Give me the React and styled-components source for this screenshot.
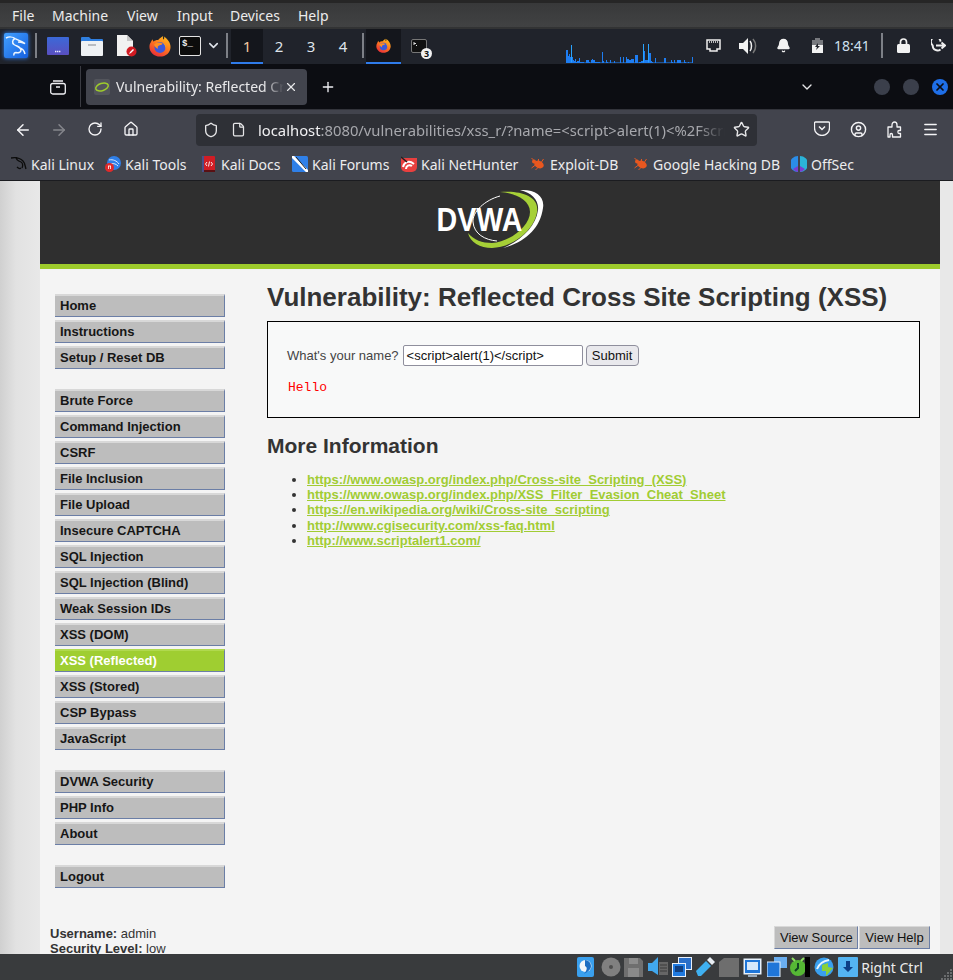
import React from "react";
import styled, { createGlobalStyle } from "styled-components";
import {
  ArrowLeft, ArrowRight, RotateCw, Home, Shield, File, Star, Menu,
  CircleUser, X, Plus, ChevronDown, Bell,
} from "lucide-react";

const Global = createGlobalStyle`
  html, body { margin: 0; padding: 0; background: #393b3d; }
  * { box-sizing: border-box; }
`;

const Shell = styled.div`
  width: 953px; height: 980px; overflow: hidden; display: flex; flex-direction: column;
  font-family: "Noto Sans", sans-serif;
`;

/* VM window menu */
const MenuBar = styled.div`
  height: 29px; border-top: 3px solid #262626; background: linear-gradient(#38393a, #414243);
  border-bottom: 2px solid #323334; display: flex; align-items: center; padding-left: 12px;
  color: #ececec; font-size: 14px;
`;
const MenuItem = styled.span`
  width: ${p => p.$w}px; flex: none;
`;

/* Desktop panel */
const Panel = styled.div`
  height: 35px; background: #20232b; display: flex; align-items: stretch; color: #dfe3ea;
`;
const Slot = styled.div`
  width: ${p => p.$w}px; flex: none; display: flex; align-items: center; justify-content: center;
  position: relative; font-size: ${p => p.$fs || 14}px; color: ${p => p.$c || "inherit"};
  padding-left: ${p => p.$pl || 0}px;
  background: ${p => (p.$active ? "#14161c" : "transparent")};
  border-bottom: 2px solid ${p => (p.$active ? "#2f7bea" : "transparent")};
`;
const KaliGlow = styled.div`
  display: flex; filter: drop-shadow(0 0 2px #2f86ff);
`;
const PanelSep = styled.div`
  width: 2px; height: 25px; background: #7d8087;
`;
const ChartArea = styled.div`
  flex: 1; display: flex; justify-content: flex-end; align-items: flex-end; padding-bottom: 1px;
`;
const TermBadge = styled.span`
  position: absolute; right: 4px; bottom: 3px; width: 11px; height: 11px; border-radius: 50%;
  background: #f2f2f2; color: #111; font-size: 9px; font-weight: 700; line-height: 11px; text-align: center;
`;

/* Firefox tabs */
const TabBar = styled.div`
  height: 45px; background: #0c0d12; display: flex; align-items: center; color: #f0f0f4;
`;
const ViewButton = styled.div`
  width: 81px; height: 41px; border-right: 1px solid #3a3b42; display: flex; align-items: center;
  justify-content: flex-end; padding-right: 14px;
`;
const Tab = styled.div`
  width: 221px; height: 36px; margin-left: 5px; border-radius: 4px; background: #42444d; display: flex; align-items: center;
  padding-left: 8px; font-size: 14px; color: #e8e8ea;
`;
const TabTitle = styled.span`
  margin-left: 6px; width: 168px; white-space: nowrap; overflow: hidden; flex: none;
  -webkit-mask-image: linear-gradient(90deg, #000 88%, transparent 100%);
  mask-image: linear-gradient(90deg, #000 88%, transparent 100%);
`;
const Favicon = styled.span`
  width: 16px; height: 16px; display: flex; flex: none; align-items: center; justify-content: center; background: #53555c; border-radius: 2px;
`;
const NewTab = styled.div`
  margin-left: 13px; display: flex;
`;
const TabSpacer = styled.div`
  flex: 1; display: flex; justify-content: flex-end; padding-right: 59px;
`;
const WinButtons = styled.div`
  display: flex; gap: 13px; padding-right: 5px;
`;
const WinDot = styled.div`
  width: 16px; height: 16px; border-radius: 50%; background: ${p => (p.$close ? "#1f6fe8" : "#3b3f4b")};
  color: #0c0d12; display: flex; align-items: center; justify-content: center;
`;

/* Firefox nav */
const NavBar = styled.div`
  height: 40px; background: #42444d; border-top: 1px solid #33343b; display: flex; align-items: center; color: #f4f4f6;
`;
const NavButton = styled.div`
  width: ${p => p.$w || 36}px; flex: none; display: flex; justify-content: center; color: ${p => (p.$off ? "#85868c" : "inherit")};
`;
const NavGroup = styled.div`
  display: flex; width: 196px; padding-left: 5px; flex: none;
`;
const UrlBar = styled.div`
  width: 561px; height: 32px; flex: none; background: #2e3036; border-radius: 4px; display: flex; align-items: center; padding-left: 7px;
  font-size: 14.8px; color: #a7a8ad;
`;
const UrlIcon = styled.div`
  width: ${p => p.$w}px; flex: none; display: flex; justify-content: center; color: #e6e6e8;
`;
const UrlText = styled.div`
  width: 467px; white-space: nowrap; overflow: hidden; flex: none;
  -webkit-mask-image: linear-gradient(90deg, #000 94%, transparent 100%);
  mask-image: linear-gradient(90deg, #000 94%, transparent 100%);
  b { font-weight: 400; color: #f0f0f2; }
`;
const StarWrap = styled.div`
  margin-left: 8px; display: flex; color: #e6e6e8;
`;
const NavRight = styled.div`
  display: flex; margin-left: 47px;
`;

/* Bookmarks */
const BookmarkBar = styled.div`
  height: 32px; background: #42444d; border-bottom: 1px solid #1b1c20; display: flex; align-items: center; padding-left: 11px; padding-bottom: 1px;
  font-size: 14px; color: #ececee;
`;
const Bookmark = styled.div`
  width: ${p => p.$w}px; flex: none; display: flex; align-items: center; gap: 4px; white-space: nowrap;
`;

/* Page */
const Page = styled.div`
  flex: 1; min-height: 0; display: flex; overflow: hidden; background: #f4f4f4;
  font-family: "Liberation Sans", Arial, sans-serif; font-size: 13px; color: #333;
`;
const LeftGutter = styled.div`
  width: 40px; flex: none; background: linear-gradient(90deg, #d0d0d0, #e2e2e2 40%, #e8e8e8);
`;
const RightGutter = styled.div`
  width: 13px; flex: none; background: #e8e8e8;
`;
const Container = styled.div`
  width: 900px; flex: none; display: flex; flex-direction: column;
`;
const Header = styled.div`
  height: 88px; flex: none; background: #2f2f2f; border-bottom: 5px solid #9ecb2c; display: flex; justify-content: center;
  padding-top: 3px;
`;
const Columns = styled.div`
  display: flex; height: 657px; flex: none;
`;
const Side = styled.nav`
  width: 227px; flex: none; padding: 25px 0 0 15px;
`;
const NavGroupList = styled.div`
  margin-bottom: 20px; display: flex; flex-direction: column; gap: 3px;
`;
const SideItem = styled.div`
  width: 170px; height: 23px; background: ${p => (p.$active ? "#9fce31" : "#bdbdbd")};
  border-top: 2px solid ${p => (p.$active ? "#b0d94e" : "#d8d8d8")};
  border-right: 1px solid #6b7ea6; border-bottom: 1px solid #6b7ea6;
  padding-left: 5px; font-weight: 700; color: ${p => (p.$active ? "#fff" : "#161616")}; line-height: 19px;
`;
const Main = styled.main`
  flex: 1; padding: 13px 20px 0 0;
`;
const Title = styled.h1`
  margin: 0; font-size: 26px; line-height: 30px; color: #333; font-weight: 700; white-space: nowrap;
`;
const Box = styled.div`
  margin-top: 9px; height: 97px; width: 653px; border: 1px solid #000; background: #f8f9f9; padding: 23px 20px 0 19px;
`;
const FormRow = styled.div`
  display: flex; align-items: center; height: 21px; color: #444;
`;
const NameInput = styled.div`
  margin-left: 4px; width: 180px; height: 21px; border: 1px solid #8f8f9d; border-radius: 2px; background: #fff; color: #111;
  padding-left: 3px; line-height: 19px; white-space: nowrap; overflow: hidden;
`;
const SubmitBtn = styled.div`
  margin-left: 3px; width: 53px; height: 21px; border: 1px solid #8f8f9d; border-radius: 4px; background: #e9e9ed; color: #111;
  text-align: center; line-height: 19px;
`;
const Hello = styled.pre`
  margin: 14px 0 0 1px; font-family: "Liberation Mono", monospace; font-size: 13px; line-height: 15px; color: #f00;
`;
const Subtitle = styled.h2`
  margin: 16px 0 0; font-size: 21px; line-height: 24px; font-weight: 700; color: #333;
`;
const Links = styled.ul`
  margin: 13.8px 0 0; padding-left: 40px; line-height: 15.25px;
`;
const LinkItem = styled.li`
  a { color: #a1cc33; font-weight: 700; text-decoration: underline; }
`;
const Footer = styled.div`
  display: flex; justify-content: space-between; padding: 0 10px;
`;
const UserInfo = styled.div`
  line-height: 15px; color: #333;
`;
const FootButtons = styled.div`
  display: flex; gap: 1px; height: 23px;
`;
const FootButton = styled.div`
  height: 23px; padding: 0 5px; background: #bdbdbd; border-top: 1px solid #d8d8d8; border-left: 1px solid #d8d8d8;
  border-right: 1px solid #6b7ea6; border-bottom: 1px solid #6b7ea6; color: #111; line-height: 21px;
  width: ${p => p.$w}px; text-align: center; white-space: nowrap;
`;

/* VM status bar */
const StatusBar = styled.div`
  height: 26px; flex: none; background: #393b3d; display: flex; align-items: center; padding-left: 577px; color: #ececec; font-size: 14px; position: relative;
`;
const StatusIcon = styled.div`
  width: 23.7px; flex: none; display: flex;
`;
const Grip = styled.svg`
  position: absolute; right: 0; bottom: 0;
`;

const Fox = ({ s = 22, id = "f" }) => (
  <svg width={s} height={s} viewBox="0 0 24 24">
    <defs>
      <linearGradient id={id + "a"} x1="0.8" y1="0" x2="0.2" y2="1">
        <stop offset="0" stopColor="#ffc01f" /><stop offset=".45" stopColor="#ff7a1f" /><stop offset="1" stopColor="#e8283a" />
      </linearGradient>
    </defs>
    <path d="M2 8c.5-1.500 1-2.500 2-3.500 0 1 .5 2 1.200 2.600C6.500 5.800 8 5.300 10 5.400 11.500 3.500 14 2 15.500 1c-.5 1.500-.5 3 .5 4 .5-1 .8-2 .5-3.500C20 4 23.500 8 23.500 13c0 6-5 10.500-11.500 10.500S.5 18.500.5 13c0-2 .5-3.500 1.500-5z" fill={`url(#${id}a)`} />
    <circle cx="12" cy="13.500" r="6" fill="#3c58dc" />
    <path d="M5.500 10.500c2.500-2.500 7-3 9.500-1-1 1.500-3 1.500-4 2-1.500.5-2 2-1 3.500-2-.5-4-2.500-4.500-4.500z" fill="#ff8f22" />
    <path d="M15 8.500c2.500 1 4 3.500 3.500 6.500-.5-2.500-1.500-4.500-3.500-6.500z" fill="#ffb01f" />
  </svg>
);

const KaliLogo = () => (
  <svg width="24" height="25" viewBox="0 0 24 25">
    <defs>
      <linearGradient id="kl" x1="0" y1="0" x2="1" y2="1">
        <stop offset="0" stopColor="#42a0ff" /><stop offset="1" stopColor="#1560e0" />
      </linearGradient>
    </defs>
    <rect width="24" height="25" rx="2" fill="url(#kl)" />
    <path d="M2 5c3-1.500 7-1 9 .5 3 2 6 2 10 5-3-1-5-1.500-7-1.500M11 5.500C8 7 8 10 10 11.500c3 2 7 2.500 7 5.500 0 3-3 3-5 2.500-1.500 0-2.500 1-2 3M15 15c3 0 5 2 6 6" fill="none" stroke="#eef6ff" strokeWidth="1.500" />
  </svg>
);

const BlueFolderScreen = () => (
  <svg width="22" height="18" viewBox="0 0 22 18">
    <defs><linearGradient id="ds" x1="0" y1="0" x2="0" y2="1"><stop offset="0" stopColor="#3b69d8" /><stop offset="1" stopColor="#5a4fc0" /></linearGradient></defs>
    <rect width="22" height="18" rx="1" fill="url(#ds)" />
    <path d="M8 14.500h6" stroke="#e8e8ff" strokeWidth="1.400" strokeDasharray="1.400 .6" />
  </svg>
);
const FilesIcon = () => (
  <svg width="22" height="20" viewBox="0 0 22 20">
    <path d="M0 2a1 1 0 011-1h7l2 2h11a1 1 0 011 1v3H0z" fill="#2f7fe0" />
    <rect y="5" width="22" height="15" rx="1" fill="#eff1f4" />
    <rect x="7" y="8" width="8" height="2" fill="#b9bcc2" />
  </svg>
);
const NoteIcon = () => (
  <svg width="21" height="22" viewBox="0 0 21 22">
    <path d="M1 0h10l6 6v15H1z" fill="#f1f1f1" />
    <path d="M11 0v6h6z" fill="#c6c6c6" />
    <circle cx="15.500" cy="16.500" r="5" fill="#d11a22" />
    <path d="M13 19l1-2 3-3 1 1-3 3z" fill="#fff" />
  </svg>
);
const TermIcon = () => (
  <svg width="22" height="20" viewBox="0 0 22 20">
    <rect x=".5" y=".5" width="21" height="19" rx="1.500" fill="#0c0c0c" stroke="#e4e4e4" />
    <text x="3" y="10" fontFamily="'Liberation Mono', monospace" fontSize="9" fontWeight="700" fill="#eee">$_</text>
  </svg>
);
const TaskTermIcon = () => (
  <svg width="16" height="14" viewBox="0 0 16 14">
    <rect x=".5" y=".5" width="15" height="13" rx="1.500" fill="#111" stroke="#777" />
    <path d="M3 3v3M3 4.500h2M5 6.500h1" stroke="#ddd" strokeWidth="1" fill="none" />
  </svg>
);

const net = { 566:13,567:13,568:7,569:9,570:6,571:18,572:6,573:3,574:2,575:4,576:1,577:2,578:2,579:5,580:1,581:1,582:1,583:1,586:3,587:3,588:3,589:1,591:3,592:4,593:3,594:3,595:1,596:1,597:1,598:1,599:1,602:11,603:2,606:3,607:1,610:3,614:2,620:6,623:6,626:6,627:4,628:4,629:3,630:3,631:4,632:4,633:4,635:8,636:8,637:8,639:1,640:1,641:2,642:2,643:19,644:12,645:3,646:3,647:3,648:19,649:10,650:10,651:2,652:1,655:5,664:5,665:5,671:3,672:1,674:3,677:3,678:3,679:3,680:3,684:3,685:1,688:1,692:6 };
const NetChart = () => (
  <svg width="127" height="19" viewBox="566 0 127 19">
    {Object.entries(net).map(([x, h]) => (
      <rect key={x} x={x} y={19 - h} width="1" height={h} fill={h > 15 ? "#29a3ff" : "#1e7df2"} />
    ))}
    <rect x="566" y="18" width="127" height="1" fill="#1e7df2" opacity=".55" />
  </svg>
);

const NetIcon = () => (
  <svg width="15" height="13" viewBox="0 0 15 13"><path d="M1 1h13v9h-3v2H4v-2H1z" fill="none" stroke="#eee" strokeWidth="1.500" /><path d="M3 3h9" stroke="#eee" strokeWidth="1.500" strokeDasharray="1 1" /></svg>
);
const SpeakerIcon = () => (
  <svg width="18" height="16" viewBox="0 0 18 16"><path d="M0 5h4l5-5v16l-5-5H0z" fill="#f2f2f2" /><path d="M11 3c2 2.500 2 7.500 0 10" fill="none" stroke="#eee" strokeWidth="1.500" /><path d="M14 1c3.500 4 3.500 10 0 14" fill="none" stroke="#777" strokeWidth="1.500" /></svg>
);
const BatteryIcon = () => (
  <svg width="11" height="15" viewBox="0 0 11 15"><path d="M3 0h5v2h3v5H0V2h3z" fill="#77797e" /><path d="M0 7h11v8H0z" fill="#f2f2f2" /><path d="M6 5L3 9h2l-1 3 4-4H6z" fill="#20232b" /></svg>
);
const LockIcon = () => (
  <svg width="13" height="15" viewBox="0 0 13 15"><path d="M3.500 7V4a3 3 0 016 0v3" fill="none" stroke="#f2f2f2" strokeWidth="1.700" /><rect y="6" width="13" height="9" rx="1.500" fill="#f2f2f2" /></svg>
);
const LogoutIcon = () => (
  <svg width="15" height="13" viewBox="0 0 15 13"><path d="M9.500 2.600A4.800 4.800 0 101.700 6.500a4.800 4.800 0 007.800 3.900" fill="none" stroke="#eee" strokeWidth="1.900" /><path d="M5 6.500h8M10.500 3.500l3.500 3-3.500 3" fill="none" stroke="#eee" strokeWidth="1.900" /></svg>
);
const PocketIcon = () => (
  <svg width="16" height="15" viewBox="0 0 16 15"><path d="M1.500 1h13a1 1 0 011 1v5a7.500 7.500 0 01-15 0V2a1 1 0 011-1z" fill="none" stroke="#f4f4f6" strokeWidth="1.300" /><path d="M5 5.500l3 3 3-3" fill="none" stroke="#f4f4f6" strokeWidth="1.500" /></svg>
);
const PuzzleIcon = () => (
  <svg width="15" height="17" viewBox="0 0 15 17"><path d="M1 6h4V4c0-4 5-4 5 0v2h3.500v3.500H12c-1.500 0-1.500 3 0 3h1.500V16H5.500v-2c0-2-2.500-2-2.500 0v2H1z" fill="none" stroke="#f4f4f6" strokeWidth="1.300" strokeLinejoin="round" /></svg>
);
const TabFav = () => (
  <svg width="16" height="12" viewBox="0 0 16 12"><ellipse cx="8" cy="6" rx="6.500" ry="3.600" transform="rotate(-18 8 6)" fill="none" stroke="#9ecb2c" strokeWidth="1.500" /></svg>
);

const DragonFav = () => (
  <svg width="16" height="16" viewBox="0 0 16 16"><path d="M0 2c5-1 9 0 12 3 2 2 2 5 3 8M5 1c0 3 2 4 5 5 2 1 2 4 1 6M10 12c-1 1-3 0-4-1" fill="none" stroke="#0c0c0c" strokeWidth="1.300" /></svg>
);
const ToolsFav = () => (
  <svg width="16" height="16" viewBox="0 0 16 16"><circle cx="9" cy="7" r="7" fill="#2f7fe8" /><path d="M4 4c4-1 8 1 10 4M6 8c3-1 5 0 7 2" stroke="#d6e8ff" fill="none" /><circle cx="4.500" cy="11.500" r="4.500" fill="#e02a2a" /><path d="M3 10h3M3.500 10v3M5.500 10v3" stroke="#fff" strokeWidth=".8" /></svg>
);
const DocsFav = () => (
  <svg width="16" height="16" viewBox="0 0 16 16"><rect width="13" height="15" x="1" rx="1" fill="#d01d25" /><rect x="1" y="14" width="13" height="2" fill="#5a1013" /><rect x="1" width="2" height="16" fill="#4a4f8a" /><path d="M6 6L4.500 8 6 10M10 6l1.500 2L10 10M8.500 5.500L7.500 10.500" stroke="#fff" strokeWidth=".9" fill="none" /></svg>
);
const ForumsFav = () => (
  <svg width="16" height="16" viewBox="0 0 16 16"><rect width="16" height="16" rx="1.500" fill="#2f80e8" /><path d="M0 0l16 16" stroke="#fff" strokeWidth="3" /><path d="M4 1l10 12" stroke="#222" strokeWidth="1" /></svg>
);
const NetHunterFav = () => (
  <svg width="16" height="16" viewBox="0 0 16 16"><path d="M0 2h16v9a5 5 0 01-5 5H5a5 5 0 01-5-5z" fill="#e8403f" /><path d="M2 11C3 6 8 4 13 8M5 13c0-3 3-5 6-3" stroke="#fff" strokeWidth="2" fill="none" /><path d="M0 1l6 5" stroke="#222" strokeWidth="1.500" /></svg>
);
const BugFav = () => (
  <svg width="16" height="14" viewBox="0 0 15 14"><ellipse cx="8.500" cy="7.500" rx="5" ry="3.600" transform="rotate(25 8.500 7.500)" fill="#e8571f" /><circle cx="3.500" cy="4.500" r="2" fill="#e8571f" /><path d="M1 11l4-3M5 13l3-3M1 1l3 3M8 2l0 3M13 2l-2 3" stroke="#e8571f" strokeWidth="1" /></svg>
);
const OffSecFav = () => (
  <svg width="16" height="16" viewBox="0 0 16 16"><path d="M7 0v16A8 8 0 017 0z" fill="#2b8de8" /><path d="M9 0a8 8 0 010 16z" fill="#2bb3d8" /><path d="M7 10v6a8 8 0 01-5-3zM9 10v6a8 8 0 005-3z" fill="#7a3fd0" /></svg>
);

const DvwaLogo = () => (
  <svg width="120" height="70" viewBox="0 0 120 70">
    <path d="M70 8C90 6 110 12 107 28 104 48 80 64 62 64 50 64 40 58 38 49 44 56 52 59 62 59 80 58 100 42 100 28 100 16 85 9 70 8Z" fill="#a6d037" />
    <path d="M90 6C105 5 115 12 113 24 110 45 95 58 73 64 92 56 106 42 108 26 109 16 102 9 90 6Z" fill="#fff" />
    <path d="M70 12C55 16 42 28 43 38 44 50 55 56 67 57" fill="none" stroke="#fff" strokeWidth="1" />
    <text x="6.500" y="47" fontFamily="'Liberation Sans', sans-serif" fontWeight="700" fontSize="34" fill="#fff" textLength="86" lengthAdjust="spacingAndGlyphs">DVWA</text>
  </svg>
);

const HddS = () => (
  <svg width="17" height="20" viewBox="0 0 17 20"><rect width="17" height="20" rx="2" fill="#3aa0ee" /><circle cx="8.500" cy="9" r="6" fill="#f2f6fa" /><path d="M8 3a6 6 0 016 6c0 4-4 6-7 8 4-5 3-7 1-8" fill="#1d6ec2" /></svg>
);
const CdS = () => (
  <svg width="20" height="20" viewBox="0 0 20 20"><circle cx="10" cy="10" r="9.500" fill="#808080" /><circle cx="10" cy="10" r="2" fill="#4d4d4d" /></svg>
);
const FloppyS = () => (
  <svg width="19" height="19" viewBox="0 0 19 19"><path d="M0 0h16l3 3v16H0z" fill="#6f6f6f" /><rect x="5" y="0" width="9" height="6" fill="#8d8d8d" /><rect x="4" y="10" width="11" height="9" fill="#8a8a8a" /></svg>
);
const AudioS = () => (
  <svg width="20" height="20" viewBox="0 0 20 20"><path d="M0 6h4l6-6v18L4 14H0z" fill="#41a8ee" /><rect x="11" y="5" width="9" height="13" fill="#666" /><path d="M12 8h7M12 11h7M12 14h7" stroke="#3a3a3a" /></svg>
);
const NetS = () => (
  <svg width="20" height="20" viewBox="0 0 20 20"><rect x="6.500" y=".5" width="13" height="12" fill="#2a6fc9" stroke="#e8f0fa" /><rect x=".5" y="6.500" width="13" height="13" fill="#1f7ae0" stroke="#e8f0fa" /><rect x="3" y="9" width="8" height="6" fill="#123f7e" /></svg>
);
const UsbS = () => (
  <svg width="20" height="20" viewBox="0 0 20 20"><path d="M1 14l10-10 5 5-10 10H3z" fill="#3fb0f0" /><path d="M12 3l3-3 5 5-3 3z" fill="#e8eef4" /></svg>
);
const FolderS = () => (
  <svg width="20" height="19" viewBox="0 0 20 19"><path d="M0 4l5-4h15v19H0z" fill="#6e6e6e" /></svg>
);
const DisplayS = () => (
  <svg width="19" height="19" viewBox="0 0 19 19"><rect x=".5" y=".5" width="18" height="16" fill="#e8f2fc" /><rect x="2" y="2" width="15" height="13" fill="#1f76d8" /><rect x="4" y="4" width="11" height="8" fill="#d6e8fa" /><rect x="5" y="17" width="9" height="2" fill="#9ab" /></svg>
);
const WindowsS = () => (
  <svg width="20" height="20" viewBox="0 0 20 20"><rect x="7" y="0" width="13" height="11" fill="#6aaef0" /><rect y="5" width="13" height="15" fill="#1f76d8" stroke="#e8f2fc" /></svg>
);
const ClockS = () => (
  <svg width="20" height="20" viewBox="0 0 20 20"><circle cx="8" cy="11" r="8" fill="#56b835" /><path d="M2 1l3 3M14 1l-3 3" stroke="#8ce060" strokeWidth="2" /><path d="M8 6v5l-3 3" stroke="#142" strokeWidth="2" fill="none" /><rect x="15" y="0" width="5" height="20" fill="#000" /></svg>
);
const GlobeS = () => (
  <svg width="20" height="20" viewBox="0 0 20 20"><circle cx="10" cy="10" r="9.500" fill="#3aa0ee" /><path d="M3 12c2-5 6-8 12-9" stroke="#e8f4fc" strokeWidth="2" fill="none" /><path d="M8 8l6-2v4l5 1-7 8v-5H8z" fill="#8ad13a" /></svg>
);
const DownS = () => (
  <svg width="20" height="20" viewBox="0 0 20 20"><rect width="20" height="20" rx="1" fill="#54b4f2" /><path d="M8 4h4v6h3l-5 5-5-5h3z" fill="#0e3f86" /></svg>
);

const groups = [
  ["Home", "Instructions", "Setup / Reset DB"],
  ["Brute Force", "Command Injection", "CSRF", "File Inclusion", "File Upload", "Insecure CAPTCHA", "SQL Injection", "SQL Injection (Blind)", "Weak Session IDs", "XSS (DOM)", "XSS (Reflected)", "XSS (Stored)", "CSP Bypass", "JavaScript"],
  ["DVWA Security", "PHP Info", "About"],
  ["Logout"],
];
const links = [
  "https://www.owasp.org/index.php/Cross-site_Scripting_(XSS)",
  "https://www.owasp.org/index.php/XSS_Filter_Evasion_Cheat_Sheet",
  "https://en.wikipedia.org/wiki/Cross-site_scripting",
  "http://www.cgisecurity.com/xss-faq.html",
  "http://www.scriptalert1.com/",
];

export default function App() {
  return (
    <Shell>
      <Global />
      <MenuBar>
        <MenuItem $w={40}>File</MenuItem>
        <MenuItem $w={75}>Machine</MenuItem>
        <MenuItem $w={50}>View</MenuItem>
        <MenuItem $w={53}>Input</MenuItem>
        <MenuItem $w={68}>Devices</MenuItem>
        <MenuItem $w={40}>Help</MenuItem>
      </MenuBar>
      <Panel>
        <Slot $w={32}><KaliGlow><KaliLogo /></KaliGlow></Slot>
        <Slot $w={8}><PanelSep /></Slot>
        <Slot $w={36}><BlueFolderScreen /></Slot>
        <Slot $w={32}><FilesIcon /></Slot>
        <Slot $w={36}><NoteIcon /></Slot>
        <Slot $w={32}><Fox id="f1" /></Slot>
        <Slot $w={28}><TermIcon /></Slot>
        <Slot $w={18}><ChevronDown size={15} strokeWidth={2.5} /></Slot>
        <Slot $w={9}><PanelSep /></Slot>
        <Slot $w={32} $fs={15} $active $c="#f0c9a0">1</Slot>
        <Slot $w={32} $fs={15}>2</Slot>
        <Slot $w={32} $fs={15}>3</Slot>
        <Slot $w={32} $fs={15}>4</Slot>
        <Slot $w={7}><PanelSep /></Slot>
        <Slot $w={35} $active><Fox s={15} id="f2" /></Slot>
        <Slot $w={35}><TaskTermIcon /><TermBadge>3</TermBadge></Slot>
        <ChartArea><NetChart /></ChartArea>
        <Slot $w={40}><NetIcon /></Slot>
        <Slot $w={30}><SpeakerIcon /></Slot>
        <Slot $w={40}><Bell size={15} fill="#f2f2f2" color="#f2f2f2" /></Slot>
        <Slot $w={28}><BatteryIcon /></Slot>
        <Slot $w={42} $fs={14} $c="#cfe0f0">18:41</Slot>
        <Slot $w={18}><PanelSep /></Slot>
        <Slot $w={24}><LockIcon /></Slot>
        <Slot $w={38} $pl={8}><LogoutIcon /></Slot>
      </Panel>
      <TabBar>
        <ViewButton>
          <svg width="16" height="16" viewBox="0 0 16 16" fill="none" stroke="#f0f0f4" strokeWidth="1.300"><rect x=".7" y="4.500" width="14.600" height="10.500" rx="2" /><path d="M3 2h10M6 8h4" /></svg>
        </ViewButton>
        <Tab>
          <Favicon><TabFav /></Favicon>
          <TabTitle>Vulnerability: Reflected Cross Site</TabTitle>
          <X size={14} />
        </Tab>
        <NewTab><Plus size={16} /></NewTab>
        <TabSpacer><ChevronDown size={16} color="#e6e6e8" /></TabSpacer>
        <WinButtons>
          <WinDot /><WinDot />
          <WinDot $close><X size={12} strokeWidth={3.5} /></WinDot>
        </WinButtons>
      </TabBar>
      <NavBar>
        <NavGroup>
          <NavButton><ArrowLeft size={18} /></NavButton>
          <NavButton $off><ArrowRight size={18} /></NavButton>
          <NavButton><RotateCw size={16} /></NavButton>
          <NavButton><Home size={16} /></NavButton>
        </NavGroup>
        <UrlBar>
          <UrlIcon $w={16}><Shield size={16} /></UrlIcon>
          <UrlIcon $w={39}><File size={15} /></UrlIcon>
          <UrlText><b>localhost</b>:8080/vulnerabilities/xss_r/?name=&lt;script&gt;alert(1)&lt;%2Fscript&gt;</UrlText>
          <StarWrap><Star size={17} /></StarWrap>
        </UrlBar>
        <NavRight>
          <NavButton><PocketIcon /></NavButton>
          <NavButton><CircleUser size={17} /></NavButton>
          <NavButton><PuzzleIcon /></NavButton>
          <NavButton><Menu size={17} /></NavButton>
        </NavRight>
      </NavBar>
      <BookmarkBar>
        <Bookmark $w={94}><DragonFav />Kali Linux</Bookmark>
        <Bookmark $w={96}><ToolsFav />Kali Tools</Bookmark>
        <Bookmark $w={91}><DocsFav />Kali Docs</Bookmark>
        <Bookmark $w={109}><ForumsFav />Kali Forums</Bookmark>
        <Bookmark $w={129}><NetHunterFav />Kali NetHunter</Bookmark>
        <Bookmark $w={103}><BugFav />Exploit-DB</Bookmark>
        <Bookmark $w={158}><BugFav />Google Hacking DB</Bookmark>
        <Bookmark $w={70}><OffSecFav />OffSec</Bookmark>
      </BookmarkBar>
      <Page>
        <LeftGutter />
        <Container>
          <Header><DvwaLogo /></Header>
          <Columns>
            <Side>
              {groups.map((g, i) => (
                <NavGroupList key={i}>
                  {g.map(t => <SideItem key={t} $active={t === "XSS (Reflected)"}>{t}</SideItem>)}
                </NavGroupList>
              ))}
            </Side>
            <Main>
              <Title>Vulnerability: Reflected Cross Site Scripting (XSS)</Title>
              <Box>
                <FormRow>
                  What's your name?
                  <NameInput>&lt;script&gt;alert(1)&lt;/script&gt;</NameInput>
                  <SubmitBtn>Submit</SubmitBtn>
                </FormRow>
                <Hello>Hello</Hello>
              </Box>
              <Subtitle>More Information</Subtitle>
              <Links>
                {links.map(l => <LinkItem key={l}><a href="#">{l}</a></LinkItem>)}
              </Links>
            </Main>
          </Columns>
          <Footer>
            <UserInfo><b>Username:</b> admin<br /><b>Security Level:</b> low</UserInfo>
            <FootButtons>
              <FootButton $w={84}>View Source</FootButton>
              <FootButton $w={71}>View Help</FootButton>
            </FootButtons>
          </Footer>
        </Container>
        <RightGutter />
      </Page>
      <StatusBar>
        <StatusIcon><HddS /></StatusIcon>
        <StatusIcon><CdS /></StatusIcon>
        <StatusIcon><FloppyS /></StatusIcon>
        <StatusIcon><AudioS /></StatusIcon>
        <StatusIcon><NetS /></StatusIcon>
        <StatusIcon><UsbS /></StatusIcon>
        <StatusIcon><FolderS /></StatusIcon>
        <StatusIcon><DisplayS /></StatusIcon>
        <StatusIcon><WindowsS /></StatusIcon>
        <StatusIcon><ClockS /></StatusIcon>
        <StatusIcon><GlobeS /></StatusIcon>
        <StatusIcon><DownS /></StatusIcon>
        <span>Right Ctrl</span>
        <Grip width="13" height="13" viewBox="0 0 13 13" fill="#6a6c6e">
          <rect x="10" y="2" width="2" height="2" /><rect x="7" y="5" width="2" height="2" /><rect x="10" y="5" width="2" height="2" />
          <rect x="4" y="8" width="2" height="2" /><rect x="7" y="8" width="2" height="2" /><rect x="10" y="8" width="2" height="2" />
          <rect x="1" y="11" width="2" height="2" /><rect x="4" y="11" width="2" height="2" /><rect x="7" y="11" width="2" height="2" /><rect x="10" y="11" width="2" height="2" />
        </Grip>
      </StatusBar>
    </Shell>
  );
}
